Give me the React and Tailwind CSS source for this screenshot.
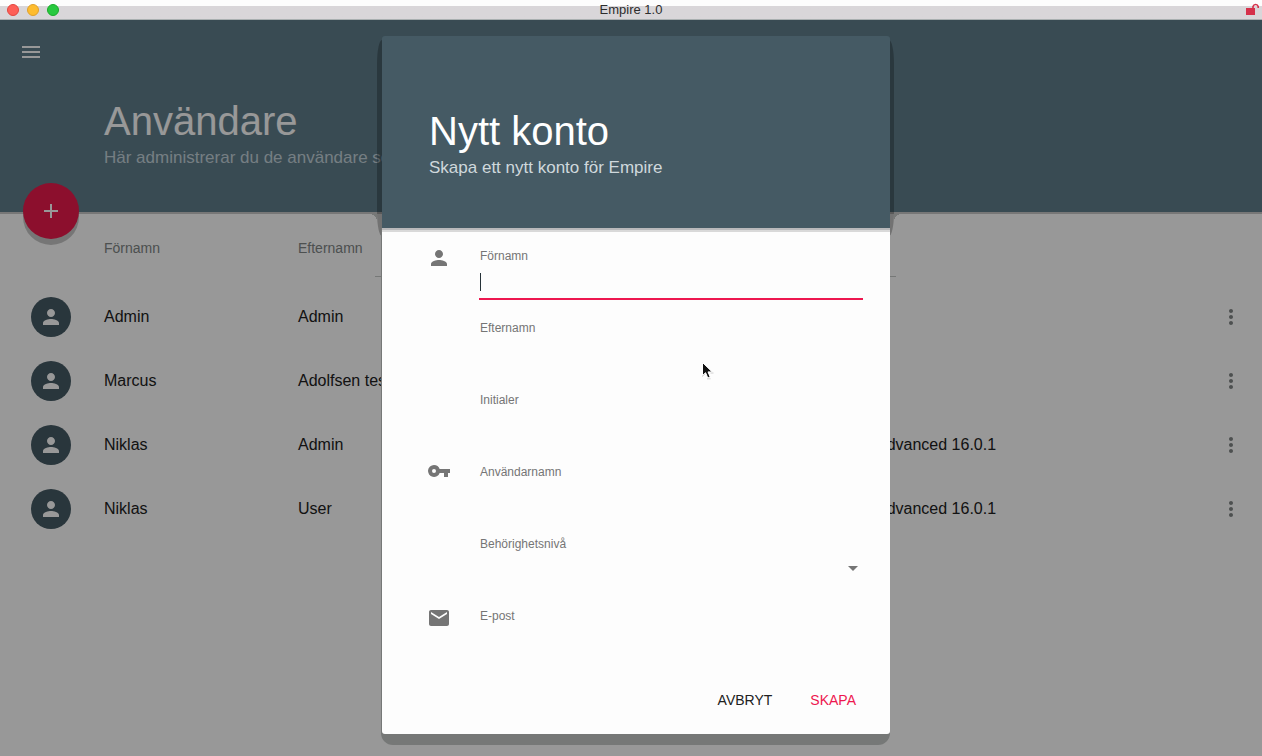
import { useState } from "react";
import {
  MdAdd,
  MdArrowDropDown,
  MdEmail,
  MdMenu,
  MdMoreVert,
  MdPerson,
} from "react-icons/md";

const users = [
  { id: 1, firstName: "Admin", lastName: "Admin", license: "" },
  { id: 2, firstName: "Marcus", lastName: "Adolfsen test", license: "" },
  { id: 3, firstName: "Niklas", lastName: "Admin", license: "Advanced 16.0.1" },
  { id: 4, firstName: "Niklas", lastName: "User", license: "Advanced 16.0.1" },
];

function KeyIcon({ size }) {
  return (
    <svg width={size} height={size} viewBox="0 0 24 24" fill="currentColor" aria-hidden="true">
      <path d="M12.65 7A6 6 0 0 0 7 3a6 6 0 1 0 5.65 8H17v4h4v-4h2V7zM7 11a2 2 0 1 1 0-4 2 2 0 0 1 0 4z" />
    </svg>
  );
}

const fields = [
  { name: "firstName", label: "Förnamn", icon: MdPerson },
  { name: "lastName", label: "Efternamn" },
  { name: "initials", label: "Initialer" },
  { name: "username", label: "Användarnamn", icon: KeyIcon },
  { name: "level", label: "Behörighetsnivå", type: "select" },
  { name: "email", label: "E-post", icon: MdEmail },
];

function TitleBar() {
  return (
    <header className="relative flex h-5 items-center justify-between border-b border-[#a9afb0] bg-linear-to-b from-[#fdfdfd] from-30% to-[#d9d6d9] to-30% pr-[3px] pl-[7px]">
      <div className="flex gap-2">
        <button aria-label="Stäng" className="size-3 rounded-full border border-[#e2463f] bg-[#fe5f57]" />
        <button aria-label="Minimera" className="size-3 rounded-full border border-[#e0a02b] bg-[#febc2e]" />
        <button aria-label="Maximera" className="size-3 rounded-full border border-[#1aab29] bg-[#28c93f]" />
      </div>
      <h1 className="absolute inset-x-0 text-center text-[13px] leading-4 text-[#2d2d2d]">Empire 1.0</h1>
      <svg className="h-[13px] w-[13px]" viewBox="0 0 13 13" aria-hidden="true">
        <rect x="0" y="5" width="9" height="7" fill="#d5304a" />
        <path d="M7 5V3.5a2.7 2.7 0 0 1 5.2 0V5" fill="none" stroke="#d5304a" strokeWidth="1.6" />
      </svg>
    </header>
  );
}

function UsersPage() {
  return (
    <main className="min-h-[736px] bg-[#fdfdfd]">
      <div className="relative h-48 bg-[#607d8b] pt-5 pl-[19px] shadow-[0_2px_0_#c6c6c6]">
        <button aria-label="Meny" className="block text-[#fdfdfd]">
          <MdMenu size={24} />
        </button>
        <div className="pt-8 pl-[85px]">
          <h2 className="text-[40px] leading-[50px] text-[#fdfdfd]">Användare</h2>
          <p className="text-[17px] leading-6 text-[#c4d3da]">Här administrerar du de användare som</p>
        </div>
        <button
          aria-label="Lägg till användare"
          className="absolute -bottom-[27px] left-[23px] flex size-14 items-center justify-center rounded-full bg-[#e9194b] text-[#fdfdfd] shadow-[0_6px_0_rgba(0,0,0,0.22)]"
        >
          <MdAdd size={24} />
        </button>
      </div>

      <table className="w-full table-fixed text-left text-base text-[#212121]">
        <colgroup>
          <col className="w-[104px]" />
          <col className="w-[194px]" />
          <col className="w-[578px]" />
          <col />
          <col className="w-[62px]" />
        </colgroup>
        <thead>
          <tr className="h-[73px] text-sm text-[#808585]">
            <th aria-label="Profilbild" />
            <th className="pb-0.5 font-normal">Förnamn</th>
            <th className="pb-0.5 font-normal">Efternamn</th>
            <th aria-label="Licens" />
            <th aria-label="Åtgärder" />
          </tr>
        </thead>
        <tbody>
          {users.map((user) => (
            <tr key={user.id} className="h-16">
              <td className="pl-[31px]">
                <span className="flex size-10 items-center justify-center rounded-full bg-[#455a64] text-[#fdfdfd]">
                  <MdPerson size={24} />
                </span>
              </td>
              <td>{user.firstName}</td>
              <td>{user.lastName}</td>
              <td>{user.license}</td>
              <td>
                <button aria-label="Fler val" className="ml-[19px] block text-[#808585]">
                  <MdMoreVert size={24} />
                </button>
              </td>
            </tr>
          ))}
        </tbody>
      </table>
    </main>
  );
}

function Field({ field, value, active, onChange, onFocus }) {
  const Icon = field.icon;

  return (
    <div className="flex h-[72px]">
      <div className="w-[52px] pt-[10px] text-[#757575]">{Icon && <Icon size={24} />}</div>
      <div className="flex-1">
        <label htmlFor={field.name} className="block pt-3 pl-px text-xs leading-4 text-[#757575]">
          {field.label}
        </label>
        {field.type === "select" ? (
          <div className="relative mt-1">
            <select
              id={field.name}
              value={value}
              onChange={onChange}
              onFocus={onFocus}
              className="h-8 w-full appearance-none bg-transparent pl-px text-base outline-none"
            >
              <option value=""></option>
              <option value="admin">Admin</option>
              <option value="user">User</option>
            </select>
            <MdArrowDropDown size={24} className="pointer-events-none absolute top-0 -right-0.5 text-[#757575]" />
          </div>
        ) : (
          <div className="relative mt-1">
            <input
              id={field.name}
              type="text"
              autoComplete="off"
              value={value}
              onChange={onChange}
              onFocus={onFocus}
              className={`block h-8 w-full border-b-2 bg-transparent pl-px text-base outline-none ${
                active ? "border-[#ed174f]" : "border-transparent"
              } ${value ? "caret-[#263238]" : "caret-transparent"}`}
            />
            {active && !value && (
              <span className="pointer-events-none absolute top-[5px] left-px h-[18px] w-px bg-[#263238]" />
            )}
          </div>
        )}
      </div>
    </div>
  );
}

function DialogShadow() {
  return (
    <>
      <div className="absolute top-1 -right-1 -left-[5px] h-[196px] rounded-[5px/24px] bg-black/25" />
      <div className="absolute top-[178px] -left-[13px] size-2 bg-[radial-gradient(circle_at_0_100%,transparent_8px,#767877_8px)]" />
      <div className="absolute top-[178px] -right-3 size-2 bg-[radial-gradient(circle_at_100%_100%,transparent_8px,#767877_8px)]" />
      <div className="absolute top-48 right-0 -bottom-[11px] -left-px rounded-b-xl bg-[#767877]" />
      <div className="absolute top-60 -right-[6px] -left-[7px] h-px bg-[#767877]" />
    </>
  );
}

function NewAccountDialog() {
  const [form, setForm] = useState({});
  const [activeField, setActiveField] = useState("firstName");

  return (
    <div className="absolute inset-0 flex items-start justify-center bg-black/40 pt-4 pl-[10px]">
      <div role="dialog" aria-labelledby="dialog-title" className="relative w-[508px]">
        <DialogShadow />

        <form
          className="relative rounded-t-lg rounded-b-[3px] bg-[#fdfdfd]"
          onSubmit={(e) => e.preventDefault()}
        >
          <div className="h-48 rounded-t-[3px] bg-[#455a64] pt-[70px] pl-[47px] shadow-[0_2px_0_#b9b9bb,0_4px_0_#d9d9d9]">
            <h2 id="dialog-title" className="text-[40px] leading-[50px] text-white">Nytt konto</h2>
            <p className="text-[17px] leading-6 text-[#cfd8dc]">Skapa ett nytt konto för Empire</p>
          </div>

          <div className="pt-2 pr-[27px] pl-[45px]">
            {fields.map((field) => (
              <Field
                key={field.name}
                field={field}
                value={form[field.name] || ""}
                active={activeField === field.name}
                onChange={(e) => setForm({ ...form, [field.name]: e.target.value })}
                onFocus={() => setActiveField(field.name)}
              />
            ))}
          </div>

          <div className="flex h-[66px] items-center justify-end gap-[22px] pr-[26px] pb-0.5 text-sm">
            <button type="button" className="px-2 py-2 text-[#212121]">AVBRYT</button>
            <button type="submit" className="px-2 py-2 text-[#ed174f]">SKAPA</button>
          </div>
        </form>
      </div>
    </div>
  );
}

// mouse pointer, free on top of the window
function Pointer() {
  return (
    <svg
      className="pointer-events-none absolute top-[361px] left-[701px] h-[19px] w-[13px]"
      viewBox="0 0 13 19"
      aria-hidden="true"
    >
      <path
        d="M1.5 1.5V14.5L4.6 11.7L6.8 17L9.2 16L7 10.9H11.2Z"
        fill="#111"
        stroke="#fff"
        strokeWidth="1"
      />
      <path d="M1 15.5L4 13M6 17.8H9.5M9.5 12H12.5" stroke="#c4c4c4" strokeWidth="0.8" />
    </svg>
  );
}

function App() {
  return (
    <div className="relative min-h-screen overflow-hidden font-['Liberation_Sans',Arial,sans-serif]">
      <TitleBar />
      <div className="relative">
        <UsersPage />
        <NewAccountDialog />
      </div>
      <Pointer />
    </div>
  );
}

export default App;
